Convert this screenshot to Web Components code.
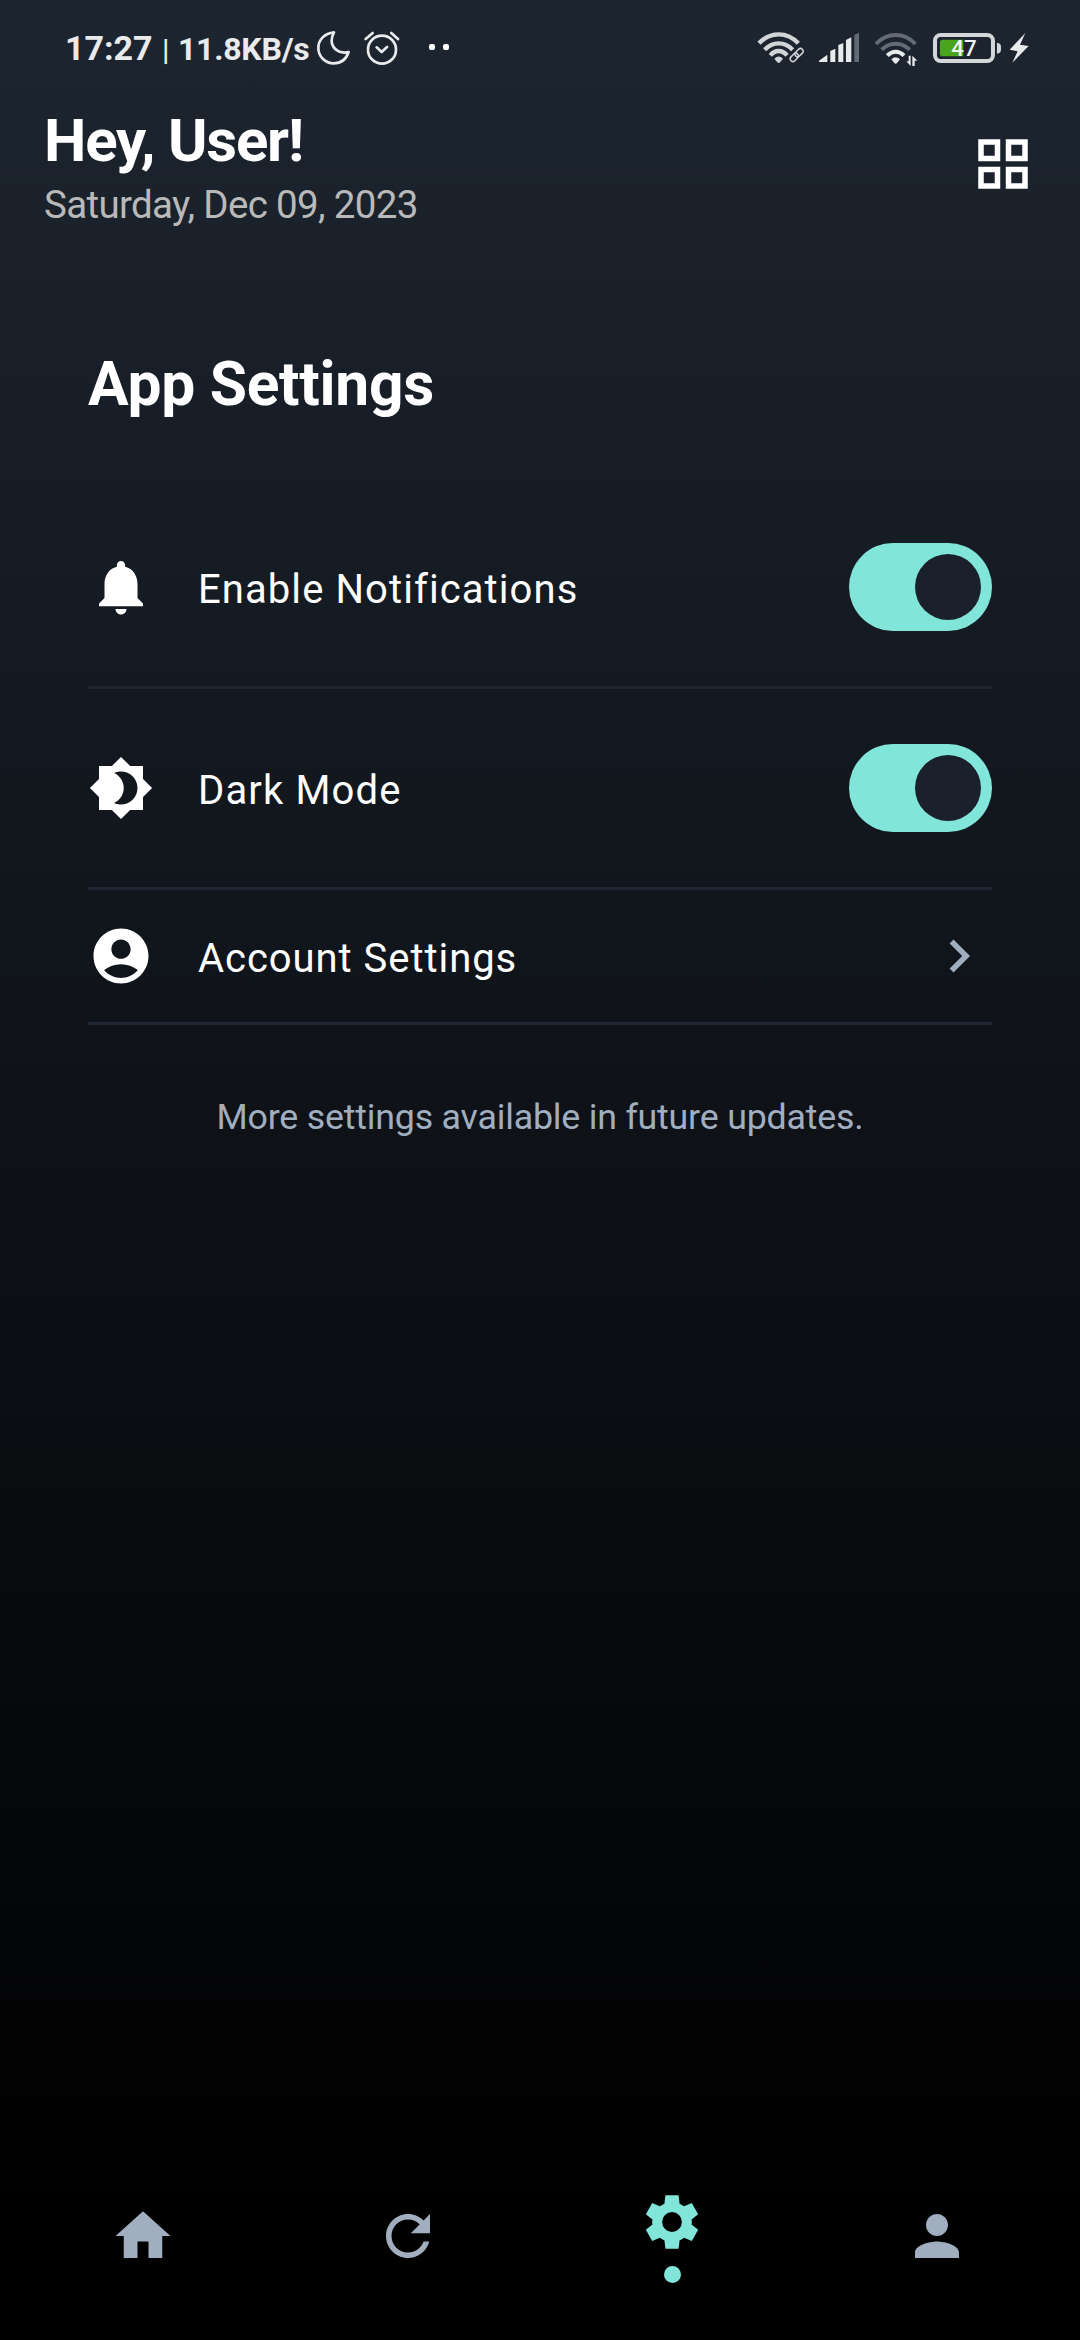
<!DOCTYPE html>
<html lang="en">
<head>
<meta charset="utf-8">
<title>App Settings</title>
<style>
html, body { margin: 0; background: #000; }
body { font-family: Roboto, "Liberation Sans", sans-serif; color: #fff; }
</style>
</head>
<body>
<settings-app></settings-app>
<script>
const define = (name, markup) => {
  const template = document.createElement('template');
  template.innerHTML = markup;
  customElements.define(name, class extends HTMLElement {
    constructor() {
      super();
      this.attachShadow({ mode: 'open' }).append(template.content.cloneNode(true));
    }
  });
};

const ICONS = {
  grid: 'M3 3v8h8V3H3zm6 6H5V5h4v4zm-6 4v8h8v-8H3zm6 6H5v-4h4v4zm4-16v8h8V3h-8zm6 6h-4V5h4v4zm-6 4v8h8v-8h-8zm6 6h-4v-4h4v4z',
  bell: 'M12 22c1.1 0 2-.9 2-2h-4c0 1.1.89 2 2 2zm6-6v-5c0-3.07-1.64-5.64-4.5-6.32V4c0-.83-.67-1.5-1.5-1.5s-1.5.67-1.5 1.5v.68C7.63 5.36 6 7.92 6 11v5l-2 2v1h16v-1l-2-2z',
  dark: 'M20 8.69V4h-4.69L12 .69 8.69 4H4v4.69L.69 12 4 15.31V20h4.69L12 23.31 15.31 20H20v-4.69L23.31 12 20 8.69zM12 18c-.89 0-1.74-.2-2.5-.55C11.56 16.5 13 14.42 13 12s-1.44-4.5-3.5-5.45C10.26 6.2 11.11 6 12 6c3.31 0 6 2.69 6 6s-2.69 6-6 6z',
  account: 'M12 2C6.48 2 2 6.48 2 12s4.48 10 10 10 10-4.48 10-10S17.52 2 12 2zm0 4c1.93 0 3.5 1.57 3.5 3.5S13.93 13 12 13s-3.5-1.57-3.5-3.5S10.07 6 12 6zm0 14c-2.03 0-4.43-.82-6.14-2.88C7.55 15.8 9.68 15 12 15s4.45.8 6.14 2.12C16.43 19.18 14.03 20 12 20z',
  chevron: 'M10 6 8.59 7.41 13.17 12l-4.58 4.59L10 18l6-6z',
  home: 'M10 20v-6h4v6h5v-8h3L12 3 2 12h3v8z',
  refresh: 'M17.65 6.35C16.2 4.9 14.21 4 12 4c-4.42 0-7.99 3.58-7.99 8s3.57 8 7.99 8c3.73 0 6.84-2.55 7.73-6h-2.08c-.82 2.33-3.04 4-5.65 4-3.31 0-6-2.69-6-6s2.69-6 6-6c1.66 0 3.14.69 4.22 1.78L13 11h7V4l-2.35 2.35z',
  gear: 'M19.13 12.94c.05-.3.07-.61.07-.94s-.02-.64-.07-.94L21.5 9.2 19.2 5.1l-2.82 1.19c-.5-.38-1.03-.7-1.62-.94L14.4 2.3H9.6l-.36 3.05c-.59.24-1.13.57-1.62.94L4.8 5.1 2.5 9.2l2.37 1.86c-.05.3-.07.63-.07.94s.02.64.07.94L2.5 14.8l2.3 4.1 2.82-1.19c.5.38 1.03.7 1.62.94l.36 3.05h4.8l.36-3.05c.59-.24 1.13-.56 1.62-.94l2.82 1.19 2.3-4.1zM12 15.6a3.6 3.6 0 1 1 0-7.2 3.6 3.6 0 0 1 0 7.2z',
  person: 'M12 12c2.21 0 4-1.79 4-4s-1.79-4-4-4-4 1.79-4 4 1.79 4 4 4zm0 2c-2.67 0-8 1.34-8 4v2h16v-2c0-2.66-5.33-4-8-4z'
};

customElements.define('app-icon', class extends HTMLElement {
  connectedCallback() {
    const root = this.shadowRoot || this.attachShadow({ mode: 'open' });
    root.innerHTML = `<style>:host{display:block;flex:none;width:66px;height:66px}svg{display:block;width:100%;height:100%;fill:currentColor}</style>
      <svg viewBox="0 0 24 24"><path fill-rule="evenodd" d="${ICONS[this.getAttribute('name')]}"/></svg>`;
  }
});

define('status-bar', `
<style>
:host { display: flex; align-items: center; height: 96px; padding: 0 51.3px 0 65px; color: #e8eaec; }
svg { display: block; flex: none; height: 36px; }
.clock { display: flex; align-items: baseline; line-height: 34px; white-space: pre; padding-top: 1px; }
.time { font-size: 34px; font-weight: 700; width: 97px; }
.bar { font-size: 30px; font-weight: 500; width: 16px; }
.speed { font-size: 32px; font-weight: 700; letter-spacing: -.25px; width: 138.7px; }
.left, .right { display: flex; align-items: center; }
.right { margin-left: auto; }
</style>
<div class="left">
  <div class="clock"><span class="time">17:27</span><span class="bar">|</span><span class="speed">11.8KB/s</span></div>
  <svg style="width:33.3px;margin-right:14px" viewBox="830 60 100 108" fill="none" stroke="currentColor" stroke-width="8" stroke-linejoin="round"><path d="M881 67C853 70 834 89 834 114c0 25 20 46 46 46 22 0 38-13 45-34-9 3-17 2-27-1-21-8-32-30-17-58z"/></svg>
  <svg style="width:36px;margin-right:28px" viewBox="972 60 108 108" fill="none" stroke="currentColor" stroke-width="8" stroke-linecap="round" stroke-linejoin="round"><circle cx="1026" cy="119" r="42"/><path d="M1010 112l15 14 16-15M977 87l21-18M1054 69l20 18"/></svg>
  <svg style="width:22px" viewBox="1164 60 66 108" fill="#fff"><rect x="1167" y="102" width="18" height="18" rx="6"/><rect x="1209" y="102" width="18" height="18" rx="6"/></svg>
</div>
<div class="right">
  <svg style="width:48px;margin-right:13.4px" viewBox="52 60 144 108" fill="none" stroke="#d2d5d8" stroke-width="13">
    <path d="M58 100Q83 73 117 73t59 27M75 119q18-19 42-19t42 19M92 136q11-13 25-13t25 13"/>
    <path fill="#d2d5d8" stroke="none" d="M104 146q13-13 26 0l-9 11q-4 4-8 0z"/>
    <g stroke="#1d242f" stroke-width="13"><path d="M154 155l32-42"/></g>
    <g stroke-width="4.5" transform="rotate(-45 171 135)"><rect x="147" y="127" width="28" height="16" rx="8"/><rect x="167" y="127" width="28" height="16" rx="8"/></g>
  </svg>
  <svg style="width:40.3px;margin-right:15.3px" viewBox="236 60 121 108" fill="currentColor"><path d="M236 156v-4l25-18v22zM270 156v-33l15-7v40zM294 156v-51l15-6v57zM317 156V90l16-8v74z"/><path fill="#636a73" d="M342 156V75l15-7v88z"/></svg>
  <svg style="width:44px;margin-right:14.7px" viewBox="403 60 132 108" fill="none" stroke="#656b74" stroke-width="12">
    <path d="M409 102q25-27 59-27t59 27M426 119q18-18 42-18t42 18"/>
    <path stroke="#e8eaec" d="M443 137q11-12 25-12t25 12"/>
    <path fill="#e8eaec" stroke="none" d="M455 148q13-12 26 0l-9 11q-4 4-8 0zM507 137h6v31l-13-14h7zM518 168v-31l15 15h-8v16z"/>
  </svg>
  <svg style="width:68.3px;margin-right:7.4px" viewBox="579 60 205 108">
    <rect x="585" y="75" width="174" height="78" rx="17" fill="none" stroke="#d4d7d9" stroke-width="12"/>
    <path fill="#4ba51a" d="M608 89h62v50h-62q-8 0-8-8V97q0-8 8-8z"/>
    <path fill="#d4d7d9" d="M771 98q12 2 12 11v11q0 9-12 11z"/>
    <text x="634" y="139" font-size="66" font-weight="500" fill="#f1f3f4" textLength="76" lengthAdjust="spacingAndGlyphs">47</text>
  </svg>
  <svg style="width:20px" viewBox="806 60 60 108" fill="currentColor"><path d="M855 69l-47 50 24 5-16 34 49-50-26-4z"/></svg>
</div>`);

define('app-header', `
<style>
:host { display: flex; justify-content: space-between; padding: 9px 44px 0; }
h1 { margin: 0; font-size: 60px; line-height: 72px; font-weight: 700; letter-spacing: -1.2px; }
p { margin: 2px 0 0; font-size: 38.5px; line-height: 52px; letter-spacing: -.67px; color: #b9b9b9; }
app-icon { margin-top: 26px; }
</style>
<div><h1><slot name="greeting"></slot></h1><p><slot name="date"></slot></p></div>
<app-icon name="grid"></app-icon>`);

define('setting-row', `
<style>
:host { display: flex; align-items: center; box-sizing: border-box; height: 201px; border-bottom: 3px solid #1f2632; }
:host([compact]) { height: 135px; }
.label { flex: 1; padding: 6px 0 0 44px; font-size: 40px; line-height: 54px; letter-spacing: var(--tracking, 1.15px); }
</style>
<slot name="icon"></slot>
<div class="label"><slot></slot></div>
<slot name="control"></slot>`);

define('toggle-switch', `
<style>
:host { display: flex; justify-content: flex-end; box-sizing: border-box; width: 143px; height: 88px; padding: 11px; border-radius: 44px; background: #81e6d9; }
i { width: 66px; height: 66px; border-radius: 50%; background: #1a202c; }
</style><i></i>`);

define('nav-bar', `
<style>
:host { display: flex; align-items: center; height: 208px; padding: 0 10.5px; color: #a0aec0; }
div { flex: 1; display: flex; flex-direction: column; align-items: center; }
.active { color: #81e6d9; gap: 11px; padding-bottom: 1px; }
.active i { width: 17px; height: 17px; border-radius: 50%; background: currentColor; }
</style>
<div><app-icon name="home"></app-icon></div>
<div><app-icon name="refresh"></app-icon></div>
<div class="active"><app-icon name="gear"></app-icon><i></i></div>
<div><app-icon name="person"></app-icon></div>`);

define('settings-app', `
<style>
:host { display: flex; flex-direction: column; box-sizing: border-box; width: 1080px; height: 2340px; background: linear-gradient(#1d2530, #000 2220px); }
main { flex: 1; padding: 118px 88px 0; }
h2 { margin: 0 0 67px; font-size: 60.5px; line-height: 72px; font-weight: 700; letter-spacing: -.27px; }
.chevron { color: #a0aec0; }
.note { margin: 69px 0 0; text-align: center; font-size: 35.75px; line-height: 46px; letter-spacing: -.2px; color: #a0aec0; }
</style>
<status-bar></status-bar>
<app-header><span slot="greeting">Hey, User!</span><span slot="date">Saturday, Dec 09, 2023</span></app-header>
<main>
  <h2>App Settings</h2>
  <setting-row style="--tracking:1.08px"><app-icon slot="icon" name="bell"></app-icon>Enable Notifications<toggle-switch slot="control"></toggle-switch></setting-row>
  <setting-row><app-icon slot="icon" name="dark"></app-icon>Dark Mode<toggle-switch slot="control"></toggle-switch></setting-row>
  <setting-row compact style="--tracking:.95px"><app-icon slot="icon" name="account"></app-icon>Account Settings<app-icon class="chevron" slot="control" name="chevron"></app-icon></setting-row>
  <p class="note">More settings available in future updates.</p>
</main>
<nav-bar></nav-bar>`);
</script>
</body>
</html>
